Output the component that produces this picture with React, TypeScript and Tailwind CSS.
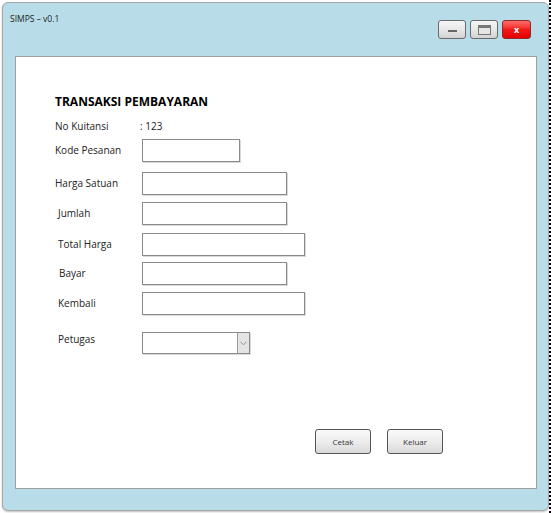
import React from "react";

type Row = {
  label: string;
  labelPad: string;
  boxWidth: string;
  gap: string;
};

const rows: Row[] = [
  { label: "Kode Pesanan", labelPad: "pl-[39px]", boxWidth: "w-[98px]", gap: "mt-[0px]" },
  { label: "Harga Satuan", labelPad: "pl-[39px]", boxWidth: "w-[145px]", gap: "mt-[10px]" },
  { label: "Jumlah", labelPad: "pl-[42px]", boxWidth: "w-[145px]", gap: "mt-[7px]" },
  { label: "Total Harga", labelPad: "pl-[42px]", boxWidth: "w-[163px]", gap: "mt-[8px]" },
  { label: "Bayar", labelPad: "pl-[43px]", boxWidth: "w-[145px]", gap: "mt-[6px]" },
  { label: "Kembali", labelPad: "pl-[42px]", boxWidth: "w-[163px]", gap: "mt-[7px]" },
];

function WinButton({ children, danger }: { children: React.ReactNode; danger?: boolean }) {
  return (
    <div
      className={
        danger
          ? "w-[29px] h-[19px] rounded-[3px] border border-[#8b2a2a] bg-gradient-to-b from-[#ff6a6a] via-[#f21818] to-[#e40000] flex items-center justify-center"
          : "w-[28px] h-[19px] rounded-[3px] border border-[#6b6b6b] bg-gradient-to-b from-[#f6f6f6] via-[#e8e8e8] to-[#d2d2d2] flex items-center justify-center"
      }
    >
      {children}
    </div>
  );
}

function PushButton({ label }: { label: string }) {
  return (
    <div className="w-[56px] h-[25px] rounded-[3px] border border-[#555] bg-gradient-to-b from-[#fafafa] via-[#ededed] to-[#d9d9d9] flex items-center justify-center text-[8px] text-[#333]">
      {label}
    </div>
  );
}

export default function App() {
  return (
    <div
      className="w-[552px] h-[513px] bg-white flex"
      style={{ fontFamily: '"Open Sans", "Noto Sans", sans-serif' }}
    >
      <div className="pt-[2px] pl-[2px] w-[549px]">
        {/* Window frame */}
        <div className="w-[547px] h-[509px] rounded-[6px] border border-[#a6a6a6] bg-[#b8dde8] shadow-[0_1px_2px_rgba(0,0,0,0.25)] flex flex-col">
          {/* Title bar */}
          <div className="h-[53px] flex justify-between">
            <div className="pl-[7px] pt-[10px] text-[8.5px] text-[#222]">SIMPS – v0.1</div>
            <div className="flex gap-[4px] pt-[17px] pr-[17px]">
              <WinButton>
                <div className="w-[9px] h-[2px] bg-[#666] mt-[3px]" />
              </WinButton>
              <WinButton>
                <div className="w-[13px] h-[10px] border border-[#777] border-t-[3px] bg-[#e4e4e4]" />
              </WinButton>
              <WinButton danger>
                <span className="text-white text-[9px] font-bold leading-none">x</span>
              </WinButton>
            </div>
          </div>

          {/* Content panel */}
          <div className="ml-[12px] w-[522px] h-[433px] bg-white border border-[#a0a0a0] flex flex-col">
            <div className="pl-[39px] pt-[38px] text-[12px] font-bold text-black leading-[14px]">
              TRANSAKSI PEMBAYARAN
            </div>

            <div className="flex items-center mt-[10px] text-[10px] text-[#222] leading-[14px]">
              <div className="pl-[39px] w-[124px]">No Kuitansi</div>
              <div>: 123</div>
            </div>

            <div className="flex flex-col mt-[6px]">
              {rows.map((r) => (
                <div key={r.label} className={`flex items-center ${r.gap}`}>
                  <div className={`w-[126px] ${r.labelPad} text-[10px] text-[#222]`}>{r.label}</div>
                  <div
                    className={`${r.boxWidth} h-[23px] border border-[#8a8a8a] bg-white shadow-[1px_1px_0_#d9d9d9]`}
                  />
                </div>
              ))}

              <div className="flex items-start mt-[17px]">
                <div className="w-[126px] pl-[42px] text-[10px] text-[#222]">Petugas</div>
                <div className="w-[108px] h-[22px] border border-[#8a8a8a] bg-white flex justify-end shadow-[1px_1px_0_#d9d9d9]">
                  <div className="w-[12px] h-full border-l border-[#9a9a9a] bg-[#e4e4e4] flex items-center justify-center">
                    <svg width="7" height="5" viewBox="0 0 7 5">
                      <path d="M0.5 0.8 L3.5 3.8 L6.5 0.8" fill="none" stroke="#888" strokeWidth="0.9" />
                    </svg>
                  </div>
                </div>
              </div>
            </div>

            <div className="flex gap-[16px] pl-[299px] mt-[75px]">
              <PushButton label="Cetak" />
              <PushButton label="Keluar" />
            </div>
          </div>
        </div>
      </div>
      <div className="w-[2px] h-full border-l-2 border-dotted border-black" />
    </div>
  );
}
